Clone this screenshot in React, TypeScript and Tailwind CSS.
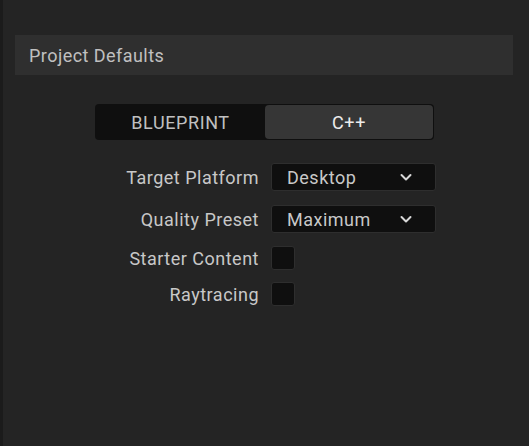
import React from "react";

function Chevron() {
  return (
    <svg width="14" height="14" viewBox="0 0 14 14" fill="none">
      <path d="M2.5 5 L7 9.5 L11.5 5" stroke="#d8d8d8" strokeWidth="2" strokeLinecap="round" strokeLinejoin="round" />
    </svg>
  );
}

function Select({ value }: { value: string }) {
  return (
    <div className="flex h-[28px] w-[165px] items-center justify-between rounded-[3px] border border-[#2e2e2e] bg-[#0f0f0f] pl-[15px] pr-[22px] text-[18px] tracking-[0.5px] text-[#c8c8c8]">
      <span>{value}</span>
      <Chevron />
    </div>
  );
}

function Check() {
  return <div className="h-[24px] w-[24px] rounded-[3px] border border-[#2e2e2e] bg-[#0f0f0f]" />;
}

export default function App() {
  const font = { fontFamily: "Roboto, 'Noto Sans', sans-serif" };
  return (
    <div className="flex h-[446px] w-[529px] bg-[#242424]" style={font}>
      <div className="w-[3px] bg-[#1b1b1b]" />
      <div className="flex flex-1 flex-col pt-[35px] pl-[12px] pr-[16px]">
        <div className="flex h-[40px] items-center bg-[#2f2f2f] pl-[14px] text-[18px] tracking-[0.45px] text-[#c0c0c0]">
          Project Defaults
        </div>
        <div className="mt-[29px] flex pl-[80px]">
          <div className="flex h-[36px] w-[339px] rounded-[4px] bg-[#0f0f0f] p-[1px]">
            <div className="flex w-[169px] items-center justify-center text-[18px] tracking-[0.6px] text-[#c0c0c0]">BLUEPRINT</div>
            <div className="flex flex-1 items-center justify-center rounded-[4px] bg-[#363636] text-[18px] tracking-[0.6px] text-[#ececec]">C++</div>
          </div>
        </div>
        <div className="mt-[23px] grid grid-cols-[244px_1fr] gap-x-[12px] text-[18px] tracking-[0.5px] text-[#c8c8c8]">
          <div className="flex h-[28px] items-center justify-end">Target Platform</div>
          <Select value="Desktop" />
          <div className="mt-[14px] flex h-[28px] items-center justify-end">Quality Preset</div>
          <div className="mt-[14px]"><Select value="Maximum" /></div>
          <div className="mt-[13px] flex h-[24px] items-center justify-end">Starter Content</div>
          <div className="mt-[13px]"><Check /></div>
          <div className="mt-[12px] flex h-[24px] items-center justify-end">Raytracing</div>
          <div className="mt-[12px]"><Check /></div>
        </div>
      </div>
    </div>
  );
}
